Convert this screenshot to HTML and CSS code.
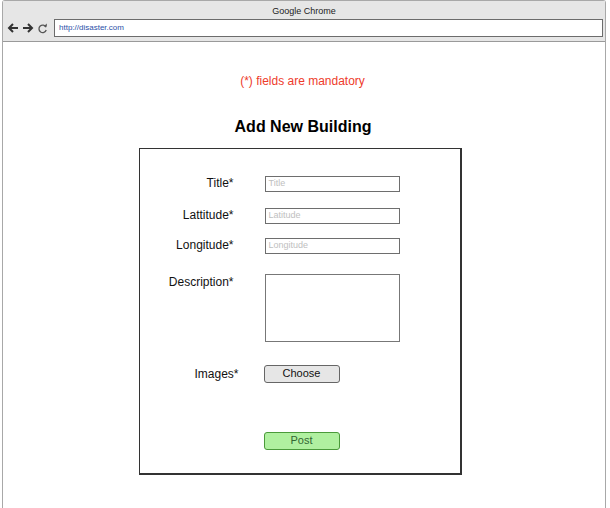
FILE: index.html
```html
<!DOCTYPE html>
<html>
<head>
<meta charset="utf-8">
<link rel="stylesheet" href="styles.css">
</head>
<body>
<div class="window">
  <div class="chrome">
    <div class="chrome-title">Google Chrome</div>
    <div class="navrow">
      <div class="navicons">
        <svg width="12" height="12" viewBox="0 0 12 12"><path d="M11 6H2M6 2L2 6l4 4" fill="none" stroke="#333" stroke-width="2"/></svg>
        <svg width="12" height="12" viewBox="0 0 12 12"><path d="M1 6h9M6 2l4 4-4 4" fill="none" stroke="#333" stroke-width="2"/></svg>
        <svg width="11" height="11" viewBox="0 0 11 11"><path d="M9 4.2A3.7 3.7 0 1 0 9.2 7" fill="none" stroke="#555" stroke-width="1.3"/><path d="M6.6 3.6h3.2V0.6z" fill="#555"/></svg>
      </div>
      <div class="urlbar">http://disaster.com</div>
    </div>
  </div>
  <div class="page">
    <p class="mandatory">(*) fields are mandatory</p>
    <h1 class="heading">Add New Building</h1>
    <div class="formbox">
      <div class="row r-title">
        <span class="label">Title*</span>
        <div class="input">Title</div>
      </div>
      <div class="row r-lat">
        <span class="label">Lattitude*</span>
        <div class="input">Latitude</div>
      </div>
      <div class="row r-long">
        <span class="label">Longitude*</span>
        <div class="input">Longitude</div>
      </div>
      <div class="row r-desc">
        <span class="label">Description*</span>
        <div class="textarea"></div>
      </div>
      <div class="row r-img">
        <span class="label label-img">Images*</span>
        <div class="btn btn-choose">Choose</div>
      </div>
      <div class="row r-post">
        <span class="label"></span>
        <div class="btn btn-post">Post</div>
      </div>
    </div>
  </div>
</div>
</body>
</html>
```

FILE: styles.css
```css
html, body {
  margin: 0;
  padding: 0;
  background: #fff;
  font-family: "Liberation Sans", Arial, sans-serif;
}
.window {
  margin-left: 2px;
  width: 604px;
  height: 520px;
  border-left: 1px solid #a8a8a8;
  border-right: 1px solid #a8a8a8;
  border-top: 1px solid #a8a8a8;
  border-radius: 3px 3px 0 0;
  box-sizing: border-box;
}
.chrome {
  background: #e6e6e6;
  height: 40px;
  border-bottom: 1px solid #9a9a9a;
  box-sizing: content-box;
}
.chrome-title {
  text-align: center;
  font-size: 9px;
  color: #222;
  padding-top: 4px;
  height: 12px;
  line-height: 12px;
}
.navrow {
  display: flex;
  align-items: center;
  margin-top: 2px;
}
.navicons {
  display: flex;
  align-items: center;
  gap: 3px;
  padding-left: 4px;
  width: 47px;
}
.urlbar {
  width: 549px;
  height: 18px;
  box-sizing: border-box;
  background: #fff;
  border: 1px solid #6c6c6c;
  font-size: 8px;
  color: #2a50a8;
  line-height: 15px;
  padding-left: 4px;
}
.page {
  display: flex;
  flex-direction: column;
  align-items: center;
}
.mandatory {
  margin: 32px 0 0 -3px;
  color: #ee3b2b;
  font-size: 12px;
  line-height: 14px;
}
.heading {
  margin: 29px 0 0 -2px;
  font-size: 16px;
  line-height: 20px;
  font-weight: bold;
  color: #000;
}
.formbox {
  margin-top: 11px;
  margin-left: -8px;
  width: 323px;
  height: 327px;
  box-sizing: border-box;
  border: 1px solid #333;
  border-width: 1px 2px 2px 1px;
  padding-top: 27px;
}
.row {
  display: flex;
  align-items: flex-start;
}
.label {
  width: 94px;
  text-align: right;
  font-size: 12px;
  line-height: 14px;
  color: #111;
  flex: none;
}
.label-img {
  width: 99px;
}
.input {
  margin-left: 31px;
  width: 135px;
  height: 16px;
  box-sizing: border-box;
  border: 1px solid #6e6e6e;
  font-size: 9px;
  line-height: 13px;
  color: #c0c0c0;
  padding-left: 3px;
}
.r-lat { margin-top: 16px; }
.r-long { margin-top: 14px; }
.r-desc { margin-top: 20px; }
.r-desc .label { margin-top: 1px; }
.textarea {
  margin-left: 31px;
  width: 135px;
  height: 68px;
  box-sizing: border-box;
  border: 1px solid #777;
}
.r-img { margin-top: 23px; }
.r-img .label { margin-top: 2px; }
.r-img .btn { margin-left: 25px; }
.btn {
  margin-left: 30px;
  width: 76px;
  height: 18px;
  box-sizing: border-box;
  border-radius: 3px;
  font-size: 11px;
  line-height: 15px;
  text-align: center;
}
.btn-choose {
  background: #e6e6e6;
  border: 1px solid #666;
  color: #111;
}
.btn-post {
  background: #b0f0a0;
  border: 1px solid #4a9a3a;
  color: #336633;
}
.r-post { margin-top: 49px; }
```
